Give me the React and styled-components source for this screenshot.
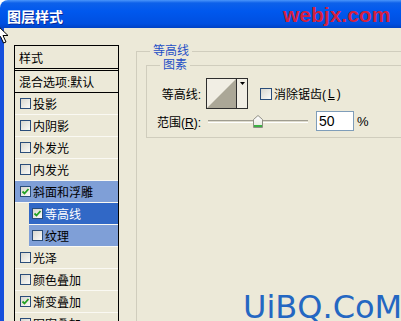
import React from "react";
import styled, { createGlobalStyle } from "styled-components";

const GlobalStyle = createGlobalStyle`
  html, body {
    margin: 0;
    padding: 0;
    background: #fff;
  }
  body {
    width: 401px;
    height: 321px;
    overflow: hidden;
    font-family: "Liberation Sans", "Noto Sans CJK SC", sans-serif;
    font-size: 12px;
    color: #000;
  }
`;

const Window = styled.div`
  position: relative;
  width: 401px;
  height: 321px;
  display: flex;
  flex-direction: column;
  overflow: hidden;
`;

const TitleBar = styled.div`
  height: 28px;
  flex: none;
  display: flex;
  align-items: center;
  padding: 3px 0 0 7px;
  box-sizing: border-box;
  border-top-left-radius: 8px;
  background: linear-gradient(#4a95fa 0, #0d61ea 3px, #0058ee 40%, #004fe0 85%, #0042c4 100%);
  color: #fff;
  font-family: "Noto Sans CJK SC", sans-serif;
  font-weight: bold;
  font-size: 14px;
  text-shadow: 1px 1px 0 #0a2a9a;
`;

const Body = styled.div`
  flex: 1;
  display: flex;
  align-items: flex-start;
  gap: 17px;
  padding: 16px 0 0 10px;
  background: #ece9d8;
  border-left: 4px solid #1650dc;
  overflow: hidden;
`;

const StyleList = styled.div`
  width: 105px;
  flex: none;
  margin-top: 1px;
  box-sizing: border-box;
  border: 1px solid #000;
  border-bottom: none;
`;

const HeadRow = styled.div`
  height: ${(p) => p.$h}px;
  display: flex;
  align-items: center;
  padding-left: 4px;
  border-bottom: ${(p) => p.$line};
`;

const tones = {
  light: { bg: "#7f9fd7", fg: "#000" },
  dark: { bg: "#3168c6", fg: "#fff" },
};

const Row = styled.div`
  height: 21px;
  display: flex;
  align-items: center;
  gap: 2px;
  margin-left: ${(p) => (p.$indent ? 14 : 0)}px;
  padding-left: ${(p) => (p.$indent ? 3 : 5)}px;
  border-bottom: 1px solid #faf9f3;
  background: ${(p) => (p.$tone ? tones[p.$tone].bg : "transparent")};
  color: ${(p) => (p.$tone ? tones[p.$tone].fg : "#000")};
`;

const Box = styled.span`
  width: ${(p) => p.$size}px;
  height: ${(p) => p.$size}px;
  flex: none;
  box-sizing: border-box;
  border: 1px solid #2a4d7a;
  background: linear-gradient(135deg, #d8d7cf, #fbfbf8);
  display: inline-flex;
  align-items: center;
  justify-content: center;
`;

const Check = ({ checked, size = 11 }) => (
  <Box $size={size}>
    {checked && (
      <svg width="9" height="9" viewBox="0 0 9 9">
        <path d="M1.5 4.5 L3.5 6.5 L7.5 2" fill="none" stroke="#21a121" strokeWidth="1.8" />
      </svg>
    )}
  </Box>
);

const Group = styled.fieldset`
  margin: 0;
  padding: ${(p) => p.$pad};
  min-width: 0;
  width: ${(p) => p.$w}px;
  min-height: ${(p) => p.$minH || 0}px;
  box-sizing: border-box;
  border: 1px solid #d0cdbd;
  flex: none;
`;

const Caption = styled.legend`
  margin-left: ${(p) => p.$offset}px;
  padding: 0 3px;
  line-height: 14px;
  font-size: 12px;
  color: #1f4fc6;
`;

const FieldRow = styled.div`
  display: flex;
  align-items: center;
  height: ${(p) => p.$h}px;
  margin-top: ${(p) => p.$top || 0}px;
`;

const FieldLabel = styled.span`
  width: 54px;
  flex: none;
  text-align: right;
  white-space: nowrap;
`;

const Picker = styled.div`
  display: flex;
  height: 31px;
  margin-left: 5px;
  box-sizing: border-box;
  border: 1px solid #2e2e2e;
  background: #f1eee4;
`;

const Preview = styled.div`
  width: 29px;
  height: 29px;
  border-right: 1px solid #2e2e2e;
  display: flex;
`;

const Drop = styled.div`
  width: 10px;
  display: flex;
  justify-content: center;
  padding-top: 3px;
  box-sizing: border-box;
`;

const CheckLabel = styled.label`
  display: flex;
  align-items: center;
  gap: 2px;
  margin-left: 12px;
`;

const Key = styled.span`
  text-decoration: underline;
`;

const Slider = styled.div`
  position: relative;
  width: 100px;
  height: 20px;
  margin-left: 7px;
  display: flex;
  align-items: center;
`;

const Track = styled.div`
  width: 100%;
  height: 1px;
  background: #dedbcd;
  border-top: 1px solid #a09d90;
  border-bottom: 1px solid #fff;
`;

const Thumb = styled.svg`
  position: absolute;
  top: 4px;
  transform: translateX(-50%);
`;

const NumberBox = styled.div`
  width: 38px;
  height: 20px;
  margin-left: 8px;
  box-sizing: border-box;
  border: 1px solid #7f9db9;
  background: #fff;
  padding-left: 2px;
  display: flex;
  align-items: center;
  font-family: "Liberation Sans", sans-serif;
  font-size: 14px;
`;

const Unit = styled.span`
  margin-left: 3px;
  font-family: "Liberation Sans", sans-serif;
  font-size: 13px;
`;

const Stamp = styled.div`
  position: absolute;
  left: 283px;
  top: 4px;
  font-family: "Liberation Sans", sans-serif;
  font-weight: bold;
  font-size: 21px;
  line-height: 21px;
  color: #d3203f;
`;

const Brand = styled.div`
  position: absolute;
  left: 243px;
  top: 293px;
  font-family: "DejaVu Sans", sans-serif;
  font-size: 32px;
  line-height: 28px;
  color: #2467c2;
`;

const Cursor = styled.svg`
  position: absolute;
  left: -4px;
  top: 24px;
`;

const effects = [
  { label: "投影" },
  { label: "内阴影" },
  { label: "外发光" },
  { label: "内发光" },
  { label: "斜面和浮雕", checked: true, tone: "light" },
  { label: "等高线", checked: true, tone: "dark", indent: true },
  { label: "纹理", tone: "light", indent: true },
  { label: "光泽" },
  { label: "颜色叠加" },
  { label: "渐变叠加", checked: true },
  { label: "图案叠加" },
];

export default function App() {
  const range = 50;

  return (
    <Window>
      <GlobalStyle />
      <TitleBar>图层样式</TitleBar>
      <Body>
        <StyleList>
          <HeadRow $h={22} $line="3px double #000">样式</HeadRow>
          <HeadRow $h={21} $line="1px solid #000">混合选项:默认</HeadRow>
          {effects.map((e) => (
            <Row key={e.label} $tone={e.tone} $indent={e.indent}>
              <Check checked={e.checked} />
              {e.label}
            </Row>
          ))}
        </StyleList>

        <Group $w={290} $minH={300} $pad="0 0 0 9px">
          <Caption $offset={4}>等高线</Caption>
          <Group $w={300} $pad="6px 0 6px 0">
            <Caption $offset={13}>图素</Caption>
            <FieldRow $h={31}>
              <FieldLabel>等高线:</FieldLabel>
              <Picker>
                <Preview>
                  <svg width="29" height="29" viewBox="0 0 29 29">
                    <polygon points="0,29 29,0 29,29" fill="#aba797" />
                  </svg>
                </Preview>
                <Drop>
                  <svg width="5" height="3" viewBox="0 0 5 3">
                    <polygon points="0,0 5,0 2.5,3" fill="#000" />
                  </svg>
                </Drop>
              </Picker>
              <CheckLabel>
                <Check size={12} />
                消除锯齿(<Key>L</Key>)
              </CheckLabel>
            </FieldRow>
            <FieldRow $h={20} $top={2}>
              <FieldLabel>
                范围(<Key>R</Key>):
              </FieldLabel>
              <Slider>
                <Track />
                <Thumb width="10" height="13" viewBox="0 0 10 13" style={{ left: `${range}%` }}>
                  <defs>
                    <linearGradient id="thumbFill" x1="0" y1="0" x2="0" y2="1">
                      <stop offset="0" stopColor="#ffffff" />
                      <stop offset="1" stopColor="#e6e5de" />
                    </linearGradient>
                  </defs>
                  <path d="M0.5 4.5 L5 0.5 L9.5 4.5 L9.5 12.5 L0.5 12.5 Z" fill="url(#thumbFill)" stroke="#8f8e84" />
                  <rect x="1" y="10" width="8" height="2" fill="#3cb043" />
                </Thumb>
              </Slider>
              <NumberBox>{range}</NumberBox>
              <Unit>%</Unit>
            </FieldRow>
          </Group>
        </Group>
      </Body>

      <Stamp>webjx.com</Stamp>
      <Brand>UiBQ.CoM</Brand>
      <Cursor width="13" height="20" viewBox="0 0 13 20">
        <path
          d="M0.5 0.5 L0.5 16.5 L4.5 12.5 L7.5 19 L10 18 L7 11.5 L12 11.5 Z"
          fill="#fff"
          stroke="#000"
        />
      </Cursor>
    </Window>
  );
}
